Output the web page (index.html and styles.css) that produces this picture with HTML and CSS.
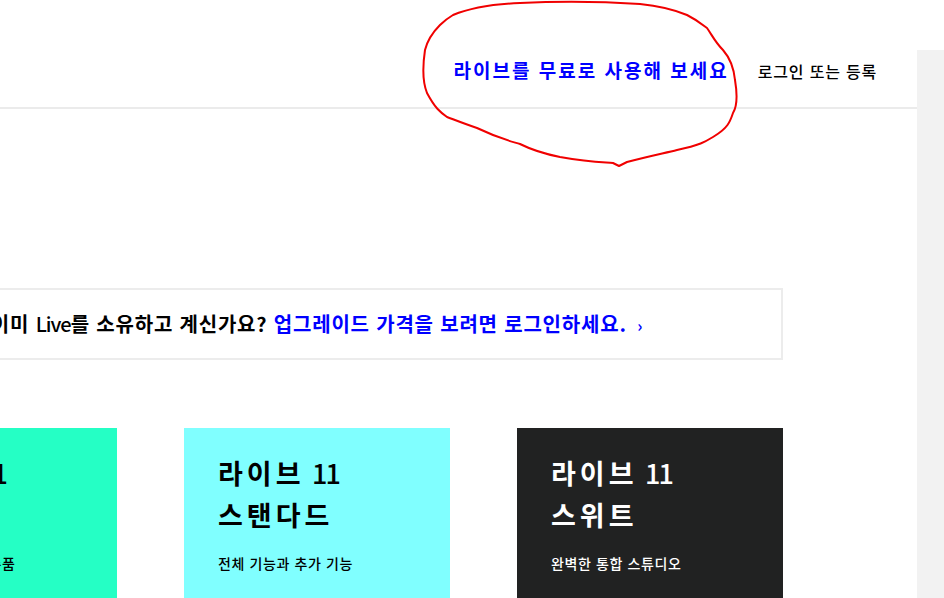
FILE: index.html
```html
<!DOCTYPE html>
<html lang="ko">
<head>
    <meta charset="UTF-8">
    <meta name="viewport" content="width=device-width, initial-scale=1.0">
    <title>라이브 11</title>
    <link rel="stylesheet" href="styles.css">
</head>
<body>
    <div class="page">
        <div class="main-col">
            <header class="site-header">
                <a class="try-link" href="#">라이브를 무료로 사용해 보세요</a>
                <a class="login-link" href="#">로그인 또는 등록</a>
            </header>
            <main class="content">
                <div class="upgrade-banner">
                    이미 <span class="latin">Live</span>를 소유하고 계신가요? <a href="#">업그레이드 가격을 보려면 로그인하세요. <span class="arrow">›</span></a>
                </div>
                <section class="editions">
                    <div class="edition edition-intro">
                        <h2>라이브 <span class="num">11</span><br>인트로</h2>
                        <p>시작에 필요한 필수품</p>
                    </div>
                    <div class="edition edition-standard">
                        <h2>라이브 <span class="num">11</span><br>스탠다드</h2>
                        <p>전체 기능과 추가 기능</p>
                    </div>
                    <div class="edition edition-suite">
                        <h2>라이브 <span class="num">11</span><br>스위트</h2>
                        <p>완벽한 통합 스튜디오</p>
                    </div>
                </section>
            </main>
        </div>
        <aside class="side-strip"></aside>
    </div>

    <!-- hand-drawn mark around the trial link -->
    <svg class="scribble" width="944" height="598" viewBox="0 0 944 598">
        <path d="M453,15 C470,8 495,4 520,3 C560,1 610,2 640,4 C660,6 675,10 687,15 C697,20 703,25 707,28 C712,35 715,42 723,50 C730,58 734,70 735,80 C737,92 738,105 733,113 C730,122 728,128 713,137 C705,142 700,145 677,150 C665,153 650,156 627,162 L619,166 L613,163 C600,162 590,162 560,157 C540,153 530,149 520,144 C510,141 500,139 477,128 C465,124 455,120 447,117 C440,112 435,108 427,93 C423,83 422,70 425,50 C427,42 432,33 440,25 C445,20 448,18 453,15 Z"/>
    </svg>
</body>
</html>
```

FILE: styles.css
```css
body {
    margin: 0;
    font-family: "Noto Sans CJK KR", sans-serif;
    color: #000;
    background: #fff;
    overflow: hidden;
}

a {
    text-decoration: none;
}

.page {
    display: flex;
    width: 944px;
    height: 598px;
}

.main-col {
    width: 917px;
    flex: none;
}

.side-strip {
    flex: 1;
    margin-top: 50px;
    background-color: #f2f2f2;
}

.site-header {
    box-sizing: border-box;
    height: 109px;
    padding: 57px 40px 0 0;
    display: flex;
    justify-content: flex-end;
    align-items: baseline;
    gap: 29px;
    border-bottom: 2px solid #ebebeb;
}

.try-link {
    color: #0000ff;
    font-size: 19px;
    font-weight: 700;
    line-height: 26px;
    letter-spacing: 2px;
}

.login-link {
    color: #000;
    font-size: 16px;
    font-weight: 500;
    line-height: 26px;
    letter-spacing: 0.8px;
}

.content {
    margin-left: -149px;
    width: 932px;
}

.upgrade-banner {
    box-sizing: border-box;
    margin-top: 179px;
    height: 72px;
    border: 2px solid #ececec;
    text-align: center;
    line-height: 68px;
    font-size: 20px;
    font-weight: 700;
    letter-spacing: 0.8px;
}

.upgrade-banner a {
    color: #0000ff;
}

.upgrade-banner .latin {
    letter-spacing: -1px;
    font-weight: 500;
}

.upgrade-banner .arrow {
    margin-left: 4px;
    font-size: 16px;
}

.editions {
    margin-top: 68px;
    display: grid;
    grid-template-columns: repeat(3, 266px);
    gap: 67px;
}

.edition {
    height: 300px;
    padding: 24px 34px 0;
    box-sizing: border-box;
}

.edition h2 {
    margin: 0;
    font-size: 27px;
    font-weight: 700;
    line-height: 42px;
    letter-spacing: 4px;
    word-spacing: -4px;
}

.edition h2 .num {
    letter-spacing: -2px;
    font-weight: 500;
}

.edition p {
    margin: 17px 0 0;
    font-size: 14px;
    font-weight: 500;
    line-height: 20px;
    letter-spacing: 0.6px;
}

.edition-intro {
    background-color: #25ffc5;
}

.edition-standard {
    background-color: #80ffff;
}

.edition-suite {
    background-color: #212222;
    color: #fff;
}

.scribble {
    position: absolute;
    top: 0;
    left: 0;
    pointer-events: none;
}

.scribble path {
    fill: none;
    stroke: #f00000;
    stroke-width: 2;
    stroke-linejoin: round;
    stroke-linecap: round;
}
```
